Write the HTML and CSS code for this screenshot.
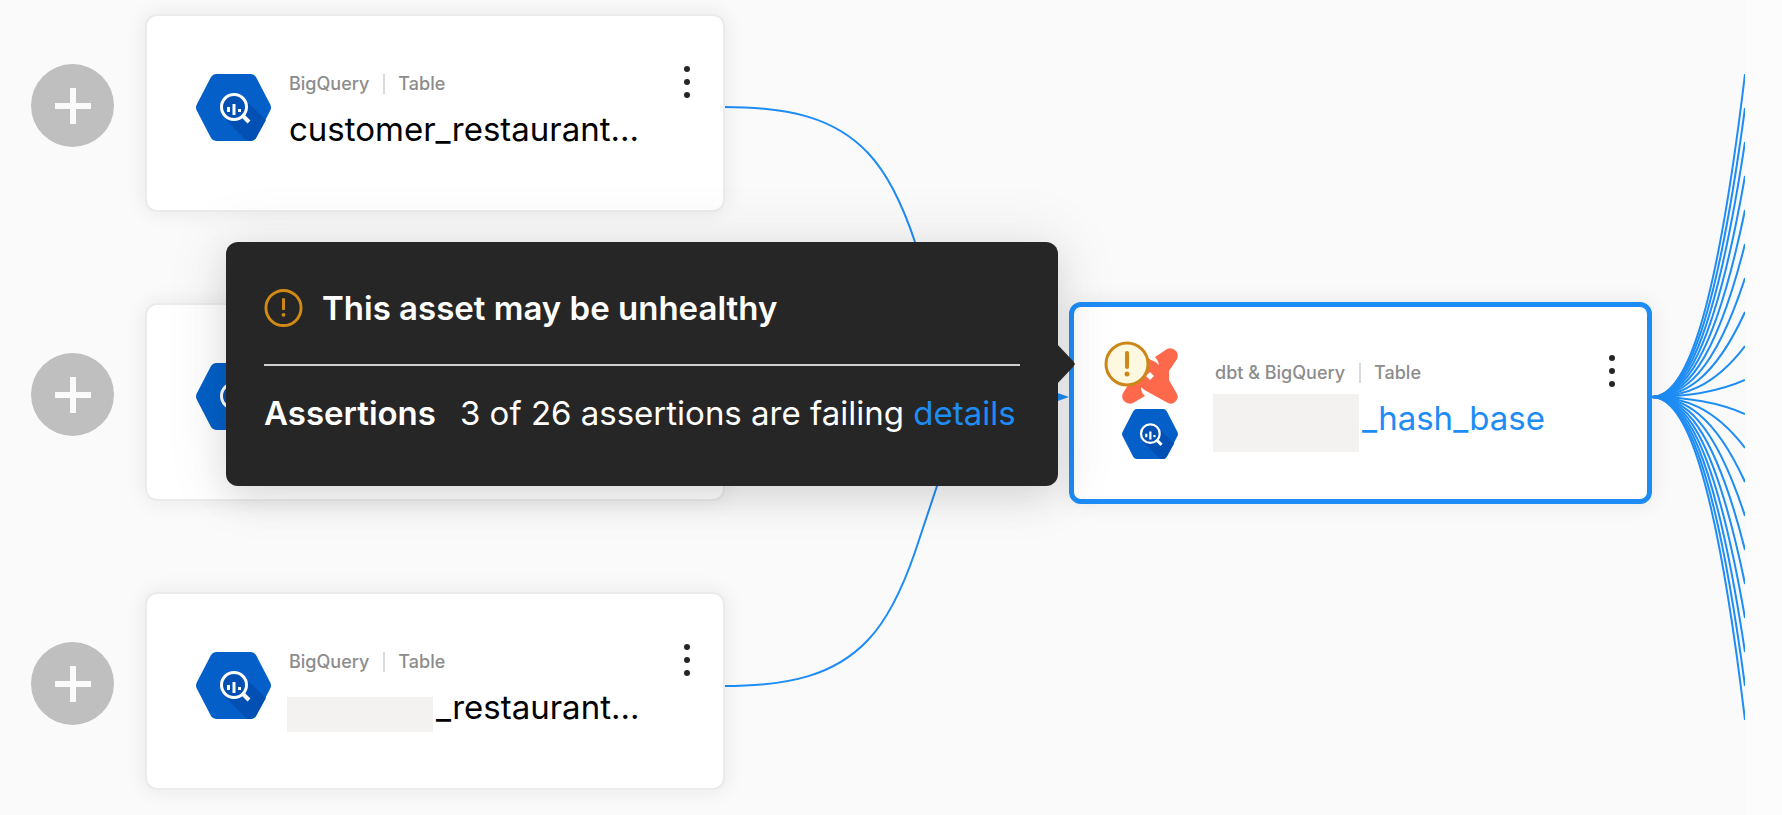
FILE: index.html
```html
<!DOCTYPE html>
<html lang="en">
<head>
<meta charset="utf-8">
<title>Lineage graph</title>
<link rel="stylesheet" href="styles.css">
</head>
<body>
<svg class="defs" aria-hidden="true">
  <symbol id="bigquery" viewBox="0 0 75 67">
    <path d="M20 0H55Q58 0 60 3L74 30Q76 33.500 74 37L60 64Q58 67 55 67H20Q17 67 15 64L1 37Q-1 33.500 1 30L15 3Q17 0 20 0Z" fill="#0460c8"/>
    <path d="M50 27L70 46L60 64Q58 67 55 67H51L27 43Z" fill="#0350b4"/>
    <circle cx="38" cy="33" r="12.500" fill="#0350b4" stroke="#fff" stroke-width="3"/>
    <path d="M46 41L53 48" stroke="#fff" stroke-width="4"/>
    <path d="M32.500 33V38M38 30V41M43.500 35V38" stroke="#fff" stroke-width="3"/>
  </symbol>
</svg>
<main class="canvas">
  <div class="viewport"><svg class="edges" aria-hidden="true">
    <g id="edges">
      <path d="M724 107C790 107 835 118 868 153C888 174 903 206 915 242L937 308C959 372 1000 397 1060 397"/>
      <path d="M724 397H1060"/>
      <path d="M724 686C790 686 835 675 868 640C888 619 903 587 915 552L937 486C959 422 1000 397 1060 397"/>
    </g>
    <path class="arrowhead" d="M1052 391L1069 397L1052 403Z"/>
  </svg></div>

  <button class="expand row-1" aria-label="Expand"><svg viewBox="0 0 36 36"><path d="M18 0V36M0 18H36"/></svg></button>
  <button class="expand row-2" aria-label="Expand"><svg viewBox="0 0 36 36"><path d="M18 0V36M0 18H36"/></svg></button>
  <button class="expand row-3" aria-label="Expand"><svg viewBox="0 0 36 36"><path d="M18 0V36M0 18H36"/></svg></button>

  <article class="node source row-1">
    <svg class="logo"><use href="#bigquery"/></svg>
    <div class="info"><p class="meta"><span>BigQuery</span><span class="kind">Table</span></p><h2 class="name">customer_restaurant...</h2></div>
    <button class="more" aria-label="More"><i></i><i></i><i></i></button>
  </article>
  <article class="node source row-2">
    <svg class="logo"><use href="#bigquery"/></svg>
  </article>
  <article class="node source row-3">
    <svg class="logo"><use href="#bigquery"/></svg>
    <div class="info"><p class="meta"><span>BigQuery</span><span class="kind">Table</span></p><h2 class="name"><span class="redacted"></span>_restaurant...</h2></div>
    <button class="more" aria-label="More"><i></i><i></i><i></i></button>
  </article>

  <article class="node selected">
    <div class="logos">
      <svg class="dbt" viewBox="0 0 56 56"><path d="M9 0Q4 0 2 3Q-1 6 1 11L10 26V31L1 45Q-1 50 2 53Q6 57 11 55L23 48Q19 45 19 39Q22 42 26 44L46 55Q51 57 54 53Q57 50 55 46L47 32V23L55 11Q57 6 54 3Q50-1 45 1L33 9Q36 12 37 17Q33 13 29 12L12 1Z" fill="#ff694b"/><path d="M28 24L32 28L28 32L24 28Z" fill="#fff"/></svg>
      <svg class="logo-small"><use href="#bigquery"/></svg>
      <svg class="health" viewBox="0 0 46 46"><circle cx="23" cy="23" r="21" fill="#fef8e1" stroke="#cb8717" stroke-width="3"/><path d="M23 12V26" stroke="#cb8717" stroke-width="4" stroke-linecap="round"/><circle cx="23" cy="33" r="2.500" fill="#cb8717"/></svg>
    </div>
    <div class="info"><p class="meta"><span>dbt &amp; BigQuery</span><span class="kind">Table</span></p><h2 class="name"><span class="redacted tall"></span>_hash_base</h2></div>
    <button class="more" aria-label="More"><i></i><i></i><i></i></button>
  </article>

  <section class="tooltip" role="tooltip">
    <h3 class="tip-title"><svg class="warn" viewBox="0 0 40 40"><circle cx="20" cy="20" r="18" fill="none" stroke="#d18b14" stroke-width="3"/><path d="M20 10V22" stroke="#d18b14" stroke-width="3"/><circle cx="20" cy="27" r="2" fill="#d18b14"/></svg>This asset may be unhealthy</h3>
    <div class="tip-row"><strong>Assertions</strong><p>3 of 26 assertions are failing <a href="#">details</a></p></div>
  </section>
</main>
<script src="edges.js"></script>
</body>
</html>
```
FILE: edges.js
```js
const edges = document.getElementById('edges');
for (let i = 0; i < 20; i++) {
  const dy = (i - 9.5) * 34;
  const path = document.createElementNS('http://www.w3.org/2000/svg', 'path');
  path.setAttribute('d', `M1652 397C1683 397 1714 ${397 + dy * 0.2} 1745 ${397 + dy}`);
  edges.append(path);
}
```
FILE: styles.css
```css
* { box-sizing: border-box; }
body { margin: 0; background: #fcfcfc; font-family: Inter, sans-serif; }
h2, h3, p { margin: 0; font-weight: 400; }
button { border: 0; padding: 0; background: none; }
.defs { position: absolute; width: 0; height: 0; }
.canvas { position: relative; min-height: 100vh; overflow: hidden; }
.viewport { position: absolute; inset: 0 37px 0 0; overflow: hidden; background: #fafafa; }
.edges { width: 100%; height: 100%; fill: none; stroke: #1e8cf5; stroke-width: 2; }
.edges .arrowhead { fill: #1e8cf5; stroke: none; }
.expand { position: absolute; left: 31px; width: 83px; height: 83px; margin-top: 50px; border-radius: 50%; background: #bfbfbf; display: grid; place-items: center; }
.expand svg { width: 36px; stroke: #fafafa; stroke-width: 6; }
.row-1 { top: 14px; }
.row-2 { top: 303px; }
.row-3 { top: 592px; }
.node { position: absolute; display: flex; background: #fff; border-radius: 12px; box-shadow: 0 0 22px rgba(20, 30, 30, .08); }
.source { left: 145px; width: 580px; height: 198px; border: 2px solid #ebebeb; padding: 58px 33px 0 49px; }
.logo { width: 75px; height: 67px; flex: none; }
.info { flex: 1; padding-left: 18px; }
.meta { display: flex; font-size: 18px; font-weight: 500; line-height: 20px; color: #8c8c8c; }
.kind { margin-left: 14px; padding-left: 13px; border-left: 2px solid #d9d9d9; }
.name { display: flex; margin-top: 15px; font-size: 33px; line-height: 40px; color: #000; white-space: nowrap; }
.redacted { width: 146px; height: 35px; margin: 10px 3px 0 -2px; background: #f3f2f1; }
.tall { height: 58px; margin-top: -4px; }
.more { width: 6px; height: 32px; margin-top: -8px; display: flex; flex-direction: column; justify-content: space-between; }
.more i { width: 6px; height: 6px; border-radius: 50%; background: #262626; }
.selected { left: 1069px; top: 302px; width: 583px; height: 202px; border: 5px solid #1e8cf5; padding: 56px 32px 0 48px; }
.selected .name { color: #1e8cf5; }
.logos { position: relative; display: flex; flex-direction: column; gap: 5px; margin-top: -15px; }
.dbt, .logo-small { width: 56px; height: 56px; }
.logo-small { height: 50px; }
.health { position: absolute; left: -18px; top: -7px; width: 46px; }
.selected .info { padding-left: 37px; }
.tooltip { position: absolute; left: 226px; top: 242px; width: 832px; height: 244px; padding: 43px 38px; border-radius: 12px; background: #262626; color: #fff; box-shadow: 0 12px 36px rgba(0, 0, 0, .1), 0 0 60px 12px rgba(0, 0, 0, .06); }
.tooltip::after { content: ""; position: absolute; right: -17px; top: 102px; width: 18px; height: 40px; background: #262626; clip-path: polygon(0 0, 16px 17px, 18px 20px, 16px 23px, 0 40px); }
.tip-title { display: flex; gap: 19px; padding-bottom: 33px; border-bottom: 2px solid #d0d0d0; font-size: 33px; font-weight: 600; line-height: 46px; }
.warn { width: 39px; }
.tip-row { display: flex; gap: 24px; margin-top: 23px; font-size: 33px; line-height: 48px; white-space: nowrap; }
.tip-row strong { font-weight: 600; }
a { color: #1e8cf5; text-decoration: none; }
```
